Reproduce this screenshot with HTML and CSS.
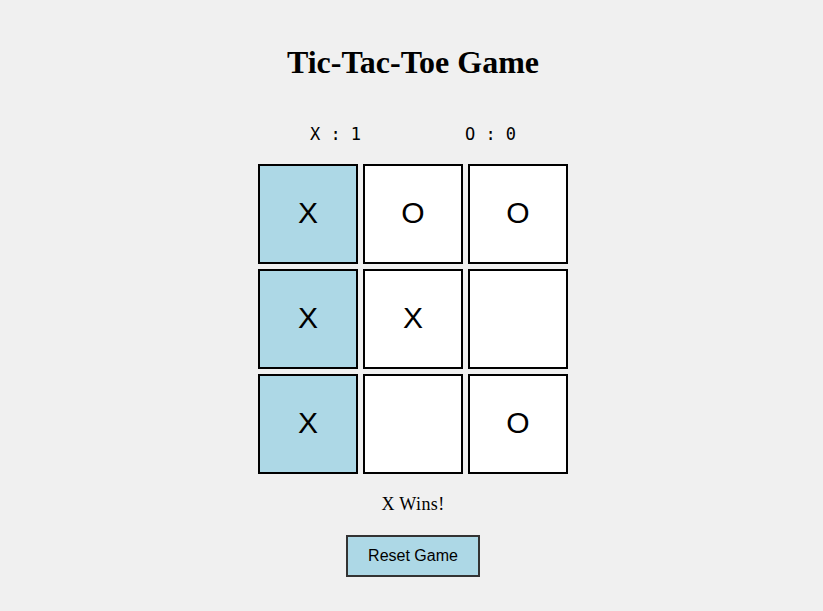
FILE: index.html
```html
<!DOCTYPE html>
<html>
<head>
<meta charset="utf-8">
<link rel="stylesheet" href="styles.css">
</head>
<body>
<main class="game">
  <h1 class="title">Tic-Tac-Toe Game</h1>
  <div class="scores">
    <span class="score">X : 1</span>
    <span class="score">O : 0</span>
  </div>
  <div class="board">
    <div class="cell win">X</div>
    <div class="cell">O</div>
    <div class="cell">O</div>
    <div class="cell win">X</div>
    <div class="cell">X</div>
    <div class="cell"></div>
    <div class="cell win">X</div>
    <div class="cell"></div>
    <div class="cell">O</div>
  </div>
  <div class="status">X Wins!</div>
  <button class="reset">Reset Game</button>
</main>
</body>
</html>
```
FILE: styles.css
```css
html, body {
  margin: 0;
  background: #f0f0f0;
}
body {
  padding: 44px 0 0 3px;
  font-family: "Liberation Serif", "Times New Roman", serif;
  color: #000;
}
.game {
  display: flex;
  flex-direction: column;
  align-items: center;
}
.title {
  margin: 0 0 43px;
  font-size: 32px;
  font-weight: bold;
  line-height: normal;
}
.scores {
  width: 310px;
  display: flex;
  justify-content: space-around;
  font-family: "DejaVu Sans Mono", monospace;
  font-size: 17px;
  line-height: 20px;
  margin-bottom: 20px;
}
.board {
  display: grid;
  grid-template-columns: repeat(3, 100px);
  grid-template-rows: repeat(3, 100px);
  gap: 5px;
}
.cell {
  box-sizing: border-box;
  border: 2px solid #000;
  background: #fff;
  display: flex;
  align-items: center;
  justify-content: center;
  padding-bottom: 3px;
  font-family: "Liberation Sans", Arial, sans-serif;
  font-size: 30px;
  line-height: 1;
}
.cell.win {
  background: #add8e6;
}
.status {
  margin-top: 20px;
  font-size: 18px;
  letter-spacing: 0.4px;
}
.reset {
  margin-top: 20px;
  padding: 10px 20px;
  font-family: "Liberation Sans", Arial, sans-serif;
  font-size: 16px;
  background: #add8e6;
  border: 2px solid #333;
  color: #000;
}
```
